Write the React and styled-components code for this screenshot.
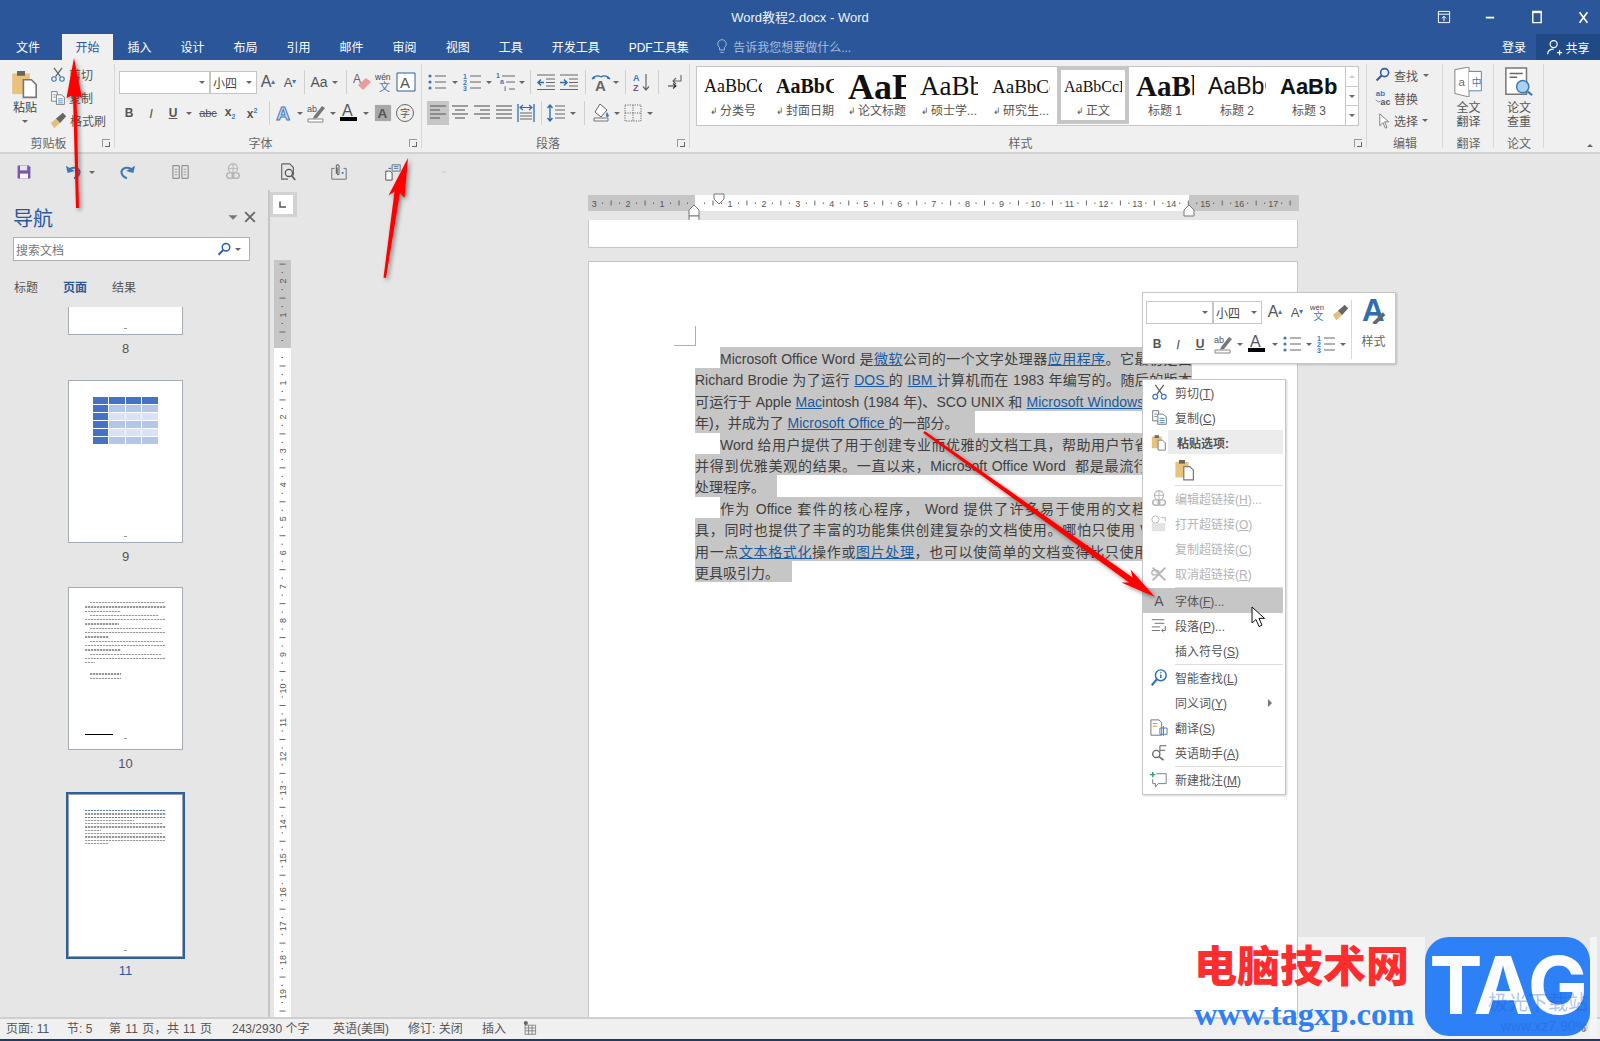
import React from 'react';
import styled, { createGlobalStyle } from 'styled-components';

const CJK = '"Liberation Sans", "Noto Sans CJK SC", sans-serif';

const Global = createGlobalStyle`
  html, body { margin: 0; padding: 0; background: #e6e6e6; overflow: hidden; }
  #root { width: 1600px; height: 1041px; }
  * { box-sizing: border-box; }
`;

const Screen = styled.div`
  position: relative;
  width: 1600px;
  height: 1041px;
  overflow: hidden;
  display: flex;
  flex-direction: column;
  font-family: ${CJK};
  font-size: 12px;
  color: #444;
  background: #e6e6e6;
`;

/* title bar + tabs */
const TitleBar = styled.div`
  height: 34px;
  background: #2b579a;
  display: grid;
  grid-template-columns: 1fr auto 1fr;
  align-items: center;
  color: #eef3fa;
  font-size: 13px;
`;
const Title = styled.div`
  grid-column: 2;
  padding-bottom: 1px;
`;
const WinButtons = styled.div`
  grid-column: 3;
  display: flex;
  justify-content: flex-end;
  gap: 12.5px;
`;
const WinBtn = styled.div`
  width: 34px;
  height: 20px;
  display: flex;
  align-items: center;
  justify-content: center;
`;
const TabRow = styled.div`
  height: 26px;
  background: #2b579a;
  display: flex;
  align-items: stretch;
`;
const Tab = styled.div`
  padding: 0 ${p => p.$r ?? p.$l ?? 14.5}px 2px ${p => p.$l ?? 14.5}px;
  display: flex;
  align-items: center;
  white-space: nowrap;
  color: ${p => (p.$active ? '#2b579a' : '#fff')};
  background: ${p => (p.$active ? '#f0f0f0' : 'transparent')};
`;
const TellMe = styled.div`
  display: flex;
  align-items: center;
  gap: 3px;
  margin-left: 11px;
  padding-bottom: 2px;
  color: #a6bddd;
  flex: 1;
`;
const Login = styled.div`
  display: flex;
  align-items: center;
  padding-bottom: 2px;
  color: #fff;
  margin-right: 10px;
`;
const Share = styled.div`
  width: 64px;
  background: #1f4a85;
  color: #fff;
  display: flex;
  align-items: center;
  justify-content: center;
  gap: 2px;
`;

/* ribbon */
const Ribbon = styled.div`
  height: 94px;
  background: #f0f0f0;
  border-bottom: 2px solid #d2d2d2;
  display: flex;
`;
const Group = styled.div`
  position: relative;
  width: ${p => p.$w}px;
  flex: none;
  display: flex;
  flex-direction: column;
  &::after {
    content: '';
    position: absolute;
    right: 0;
    top: 4px;
    bottom: 4px;
    width: 1px;
    background: #d8d8d8;
  }
`;
const GroupBody = styled.div`
  flex: 1;
  display: flex;
  flex-direction: ${p => p.$dir || 'column'};
  gap: ${p => p.$gap ?? 7}px;
  padding: ${p => p.$pad || '10px 0 0 4px'};
  min-height: 0;
`;
const GroupLabel = styled.div`
  height: 20px;
  padding: 2px ${p => p.$pr || 0}px 2px 0;
  flex: none;
  display: flex;
  align-items: center;
  justify-content: center;
  color: #666;
`;
const Launcher = styled.div`
  position: absolute;
  right: 5px;
  bottom: 5px;
  width: 8px;
  height: 8px;
  border-left: 1px solid #999;
  border-top: 1px solid #999;
  &::after {
    content: '';
    position: absolute;
    right: 0;
    bottom: 0;
    width: 4px;
    height: 4px;
    border-right: 1px solid #666;
    border-bottom: 1px solid #666;
  }
`;
const ToolRow = styled.div`
  display: flex;
  height: 24px;
  align-items: center;
  padding-left: ${p => p.$pl || 0}px;
  margin-left: ${p => p.$ml || 0}px;
`;
const Tool = styled.div`
  width: ${p => p.$w || 22}px;
  height: ${p => p.$h || 24}px;
  flex: none;
  display: flex;
  align-items: center;
  justify-content: center;
  background: ${p => (p.$on ? '#c6c6c6' : 'transparent')};
`;
const Letter = styled.span`
  font-family: ${p => p.$font || '"Liberation Sans"'}, "Noto Sans CJK SC", sans-serif;
  font-size: ${p => p.$size || 12}px;
  font-weight: ${p => (p.$bold ? 700 : 400)};
  font-style: ${p => (p.$italic ? 'italic' : 'normal')};
  text-decoration: ${p => (p.$under ? 'underline' : 'none')};
  color: ${p => p.$color || '#555'};
  line-height: 1;
  white-space: nowrap;
`;
const GlowA = styled(Letter)`
  -webkit-text-stroke: 1px #3f78b5;
`;
const Caret = styled.div`
  width: ${p => p.$w || 10}px;
  flex: none;
  display: flex;
  justify-content: center;
  transform: ${p => (p.$up ? 'scaleY(-1)' : p.$big ? 'scale(1.5)' : 'none')};
  margin-right: ${p => p.$mr || 0}px;
  &::after {
    content: '';
    border-left: 3px solid transparent;
    border-right: 3px solid transparent;
    border-top: 3px solid ${p => p.$color || '#666'};
  }
`;
const Divider = styled.div`
  width: ${p => p.$w || 8}px;
  height: 24px;
  flex: none;
  display: flex;
  justify-content: center;
  &::after {
    content: '';
    width: 1px;
    background: #d0d0d0;
  }
`;
const SelectBox = styled.div`
  width: ${p => p.$w}px;
  height: 23px;
  flex: none;
  background: #fff;
  border: 1px solid #c6c6c6;
  margin-right: ${p => p.$mr ?? 0}px;
  display: flex;
  align-items: center;
  justify-content: space-between;
  padding: 0 4px 0 2px;
  color: #444;
`;
const PasteCol = styled.div`
  width: 46px;
  display: flex;
  flex-direction: column;
  align-items: center;
  gap: 2px;
  flex: none;
  padding-top: 4px;
  line-height: 14px;
`;
const PasteCaret = styled(Caret)`
  margin-top: 3px;
`;
const ClipCol = styled.div`
  display: flex;
  flex-direction: column;
`;
const SmallAction = styled.div`
  height: 23px;
  display: flex;
  align-items: center;
  gap: 3px;
  color: #555;
  white-space: nowrap;
`;

const Gallery = styled.div`
  width: 663px;
  height: 60px;
  margin-left: 6px;
  margin-top: 6px;
  background: #fff;
  border: 1px solid #c6c6c6;
  display: flex;
`;
const Style = styled.div`
  width: 72px;
  flex: none;
  height: 58px;
  display: flex;
  flex-direction: column;
  align-items: center;
  border: ${p => (p.$on ? '4px solid #c6c6c6' : '4px solid transparent')};
  margin-top: -1px;
  overflow: hidden;
`;
const Preview = styled.div`
  width: 58px;
  height: 33px;
  flex: none;
  overflow: hidden;
  display: flex;
  align-items: center;
  white-space: nowrap;
  color: #111;
  font-family: ${p => p.$font || '"Liberation Serif"'}, serif;
  font-size: ${p => p.$size}px;
  font-weight: ${p => (p.$bold ? 700 : 400)};
`;
const StyleName = styled.div`
  display: flex;
  align-items: center;
  justify-content: center;
  gap: 2px;
  margin-top: 1px;
  color: #555;
  white-space: nowrap;
  font-size: 12px;
  line-height: 14px;
`;
const Enter = styled.span`
  font-size: 9px;
  color: #555;
`;
const GalleryScroll = styled.div`
  margin-left: auto;
  width: 13px;
  display: flex;
  flex-direction: column;
  border-left: 1px solid #c6c6c6;
`;
const ScrollCell = styled.div`
  flex: 1;
  display: flex;
  align-items: center;
  justify-content: center;
  border-bottom: 1px solid #c6c6c6;
  &:last-child { border-bottom: 0; }
`;
const BigCol = styled.div`
  flex: 1;
  display: flex;
  flex-direction: column;
  align-items: center;
  padding-top: 7px;
  color: #555;
  line-height: 14px;
  min-height: 0;
`;
const BigIcon = styled.div`
  height: 30px;
  flex: none;
  display: flex;
  align-items: center;
`;
const BigCaption = styled.div`
  text-align: center;
  margin-top: 4px;
`;
const Collapse = styled.div`
  flex: 1;
  display: flex;
  align-items: flex-end;
  justify-content: flex-end;
  padding: 0 5px 5px 0;
`;

/* quick access */
const Quick = styled.div`
  height: 36px;
  flex: none;
  display: flex;
  align-items: center;
  background: #e6e6e6;
  padding-left: 14px;
`;
const QuickBtn = styled.div`
  width: 20px;
  height: 24px;
  flex: none;
  margin-right: ${p => p.$mr || 0}px;
  margin-left: ${p => p.$ml || 0}px;
  display: flex;
  align-items: center;
  justify-content: center;
`;

/* main */
const Main = styled.div`
  flex: 1;
  min-height: 0;
  display: flex;
`;
const Nav = styled.div`
  width: 270px;
  flex: none;
  border-right: 2px solid #c6c6c6;
  display: flex;
  flex-direction: column;
  padding-top: 12px;
  overflow: hidden;
`;
const NavHead = styled.div`
  height: 30px;
  display: flex;
  align-items: center;
  padding: 0 12px 0 13px;
  color: #2b579a;
  font-size: 20px;
`;
const NavTitle = styled.span`
  flex: 1;
`;
const NavSearch = styled.div`
  width: 237px;
  height: 24px;
  margin: 5px 0 0 13px;
  background: #fff;
  border: 1px solid #b0b0b0;
  display: flex;
  align-items: center;
  padding: 0 5px 0 2px;
  color: #777;
  flex: none;
`;
const SearchText = styled.span`
  flex: 1;
`;
const NavTabs = styled.div`
  display: flex;
  height: 24px;
  margin: 13px 0 9px 14px;
  align-items: center;
  flex: none;
`;
const NavTab = styled.div`
  width: 49px;
  color: ${p => (p.$on ? '#2b579a' : '#555')};
  font-weight: ${p => (p.$on ? 700 : 400)};
`;
const Thumbs = styled.div`
  display: flex;
  flex-direction: column;
  align-items: center;
  width: 251px;
`;
const Thumb = styled.div`
  width: 115px;
  height: ${p => p.$h || 163}px;
  flex: none;
  background: #fff;
  border: 1px solid ${p => (p.$on ? '#9aa3ad' : '#a5abb3')};
  border-top-width: ${p => (p.$h ? 0 : 1)}px;
  outline: ${p => (p.$on ? '2px solid #2b5f9e' : 'none')};
  padding: ${p => p.$pad || 0};
  display: flex;
  flex-direction: column;
`;
const ThumbNum = styled.div`
  height: 24px;
  margin: 1px 0 ${p => p.$mb ?? 20}px;
  display: flex;
  align-items: center;
  justify-content: center;
  color: ${p => (p.$on ? '#2b579a' : '#555')};
  font-size: 13px;
`;
const FooterDot = styled.div`
  margin: auto auto 5px;
  width: 3px;
  height: 1px;
  background: #999;
`;
const MiniTable = styled.div`
  width: 65px;
  margin: 16px auto 0;
  display: grid;
  grid-template-columns: 15fr 16fr 15fr 16fr;
  gap: 1px;
`;
const MiniCell = styled.div`
  height: 7px;
  background: ${p => p.$c};
`;
const MiniLine = styled.div`
  height: 1.3px;
  width: ${p => p.$w}%;
  margin: ${p => p.$mt || 0}px 0 ${p => p.$mb ?? 3}px ${p => p.$ml || 0}px;
  background: repeating-linear-gradient(90deg, ${p => p.$c || '#999'} 0 2px, #e2e2e2 2px 3px);
`;
const MiniRule = styled.div`
  width: 34%;
  height: 1.4px;
  margin-top: auto;
  background: #000;
`;
const RuleDot = styled(FooterDot)`
  margin: 3px auto 10px;
`;

const RulerCol = styled.div`
  width: 27px;
  flex: none;
  padding-top: 2px;
  display: flex;
  flex-direction: column;
  align-items: center;
  overflow: hidden;
`;
const RulerCorner = styled.div`
  width: 28px;
  height: 25px;
  background: #d2d2d2;
  padding: 3px 4px;
  flex: none;
  margin-left: -1px;
`;
const RulerCornerIn = styled.div`
  height: 100%;
  background: #fff;
  display: flex;
  align-items: center;
  justify-content: center;
`;
const VRuler = styled.svg`
  margin-top: 43px;
  flex: none;
  display: block;
  margin-left: -3px;
`;

const DocArea = styled.div`
  flex: 1;
  min-width: 0;
  padding: 5px 0 0 291px;
  display: flex;
  flex-direction: column;
  overflow: hidden;
`;
const HRuler = styled.svg`
  display: block;
  flex: none;
  overflow: visible;
`;
const PageStub = styled.div`
  width: 710px;
  height: 28px;
  margin-top: 9px;
  flex: none;
  background: #fff;
  border: 1px solid #c6c6c6;
  border-top: 0;
`;
const Page = styled.div`
  width: 710px;
  flex: 1;
  margin-top: 13px;
  background: #fff;
  border: 1px solid #c6c6c6;
  border-bottom: 0;
  padding: 64px 0 0 85px;
`;
const CropMark = styled.div`
  width: 22px;
  height: 20px;
  border-right: 1px solid #b0b0b0;
  border-bottom: 1px solid #b0b0b0;
  margin-bottom: 1px;
`;
const Body = styled.div`
  margin-left: 21px;
  width: 497px;
  font-size: 14px;
  color: #404040;
`;
const Line = styled.div`
  height: 21.4px;
  padding-left: ${p => (p.$indent ? 25 : 0)}px;
  overflow: hidden;
`;
const Sel = styled.div`
  background: #c6c6c6;
  height: 21.4px;
  line-height: 25px;
  overflow: hidden;
  width: ${p => (p.$w ? `${p.$w}px` : 'auto')};
  text-align: justify;
  text-align-last: ${p => (p.$w ? 'left' : 'justify')};
  white-space: ${p => (p.$w ? 'nowrap' : 'normal')};
`;
const A = styled.span`
  color: #1a5a9e;
  text-decoration: underline;
`;

/* status */
const Status = styled.div`
  height: 24px;
  flex: none;
  background: #f0f0f0;
  border-top: 2px solid #cfcfcf;
  border-bottom: 2px solid #1f3a63;
  display: flex;
  align-items: center;
  padding: 0 6px 3px;
  color: #555;
  font-size: 12px;
  white-space: nowrap;
`;
const StatusItem = styled.div`
  width: ${p => p.$w}px;
  flex: none;
  letter-spacing: ${p => p.$ls || 0}px;
`;
const StatusRight = styled.div`
  margin-left: auto;
  display: flex;
  align-items: center;
  gap: 16px;
  padding-right: 8px;
`;

/* overlays */
const Arrows = styled.svg`
  position: absolute;
  left: 0;
  top: 0;
  pointer-events: none;
  z-index: 5;
`;
const Float = styled.div`
  position: absolute;
  left: ${p => p.$x}px;
  top: ${p => p.$y}px;
  width: ${p => p.$w}px;
  height: ${p => p.$h}px;
  background: #fff;
  border: 1px solid #c6c6c6;
  box-shadow: 1px 1px 2px rgba(0, 0, 0, 0.18);
  z-index: 3;
`;
const MiniBar = styled(Float)`
  display: flex;
  padding: 7px 0 0 3px;
`;
const MiniLeft = styled.div`
  width: 205px;
  flex: none;
  display: flex;
  flex-direction: column;
  gap: 8px;
`;
const MiniStyle = styled.div`
  flex: 1;
  margin-bottom: 4px;
  border-left: 1px solid #d8d8d8;
  display: flex;
  flex-direction: column;
  align-items: center;
  gap: 8px;
  color: #666;
`;
const MiniStyleIcon = styled.div`
  height: 26px;
  margin-top: -2px;
  padding-left: 3px;
`;
const Menu = styled(Float)``;
const MenuRow = styled.div`
  height: ${p => p.$h || 25}px;
  display: flex;
  align-items: center;
  position: relative;
  background: ${p => (p.$hover ? '#c6c6c6' : 'transparent')};
  color: ${p => (p.$off ? '#b4b4b4' : '#555')};
  margin-right: 2px;
`;
const MenuIcon = styled.div`
  width: ${p => p.$w || 32}px;
  margin-left: ${p => p.$ml || 0}px;
  flex: none;
  display: flex;
  align-items: center;
  justify-content: center;
`;
const MenuHead = styled.div`
  flex: 1;
  height: 100%;
  margin-left: -7px;
  display: flex;
  align-items: center;
  background: #ececec;
  padding-left: 9px;
  font-weight: 700;
  color: #555;
`;
const MenuLabel = styled.span`
  white-space: nowrap;
  u { text-underline-offset: 1px; }
`;
const MenuSep = styled.div`
  height: 1px;
  margin: 1px 2px 0 32px;
  background: #dcdcdc;
`;
const Submenu = styled.div`
  position: absolute;
  right: 11px;
  border-left: 4px solid #777;
  border-top: 4px solid transparent;
  border-bottom: 4px solid transparent;
`;
const Cursor = styled.svg`
  position: absolute;
  left: 1251px;
  top: 606px;
  z-index: 4;
`;

/* watermark */
const Mark = styled.div`
  position: absolute;
  left: 1190px;
  top: 937px;
  width: 407px;
  height: 99px;
  z-index: 6;
  display: flex;
`;
const MarkText = styled.div`
  width: 235px;
  flex: none;
  padding-left: 4px;
  background: linear-gradient(90deg, rgba(255, 255, 255, 0) 108px, rgba(245, 245, 245, 0.92) 108px);
`;
const MarkRed = styled.div`
  font-family: "Noto Sans CJK SC", sans-serif;
  font-weight: 900;
  font-size: 43px;
  line-height: 50px;
  margin-top: 1px;
  color: #ff2d2d;
  white-space: nowrap;
`;
const MarkBlue = styled.div`
  font-family: "Liberation Serif", serif;
  font-weight: 700;
  font-size: 32.5px;
  line-height: 34px;
  margin-top: 9px;
  color: #2f80f6;
  white-space: nowrap;
`;
const Logo = styled.div`
  position: relative;
  width: 165px;
  height: 99px;
  flex: none;
  padding-bottom: 5px;
  background: #2e80f6;
  border-radius: 24px;
  display: flex;
  justify-content: center;
  align-items: center;
  color: #fbfdff;
  font-family: "Inter", "Liberation Sans", sans-serif;
  font-weight: 700;
  font-size: 80px;
  letter-spacing: -2px;
`;
const LogoFaint = styled.div`
  position: absolute;
  right: 2px;
  top: ${p => p.$t}px;
  font-size: ${p => p.$s}px;
  font-weight: 400;
  letter-spacing: 0;
  line-height: 1.1;
  color: rgba(30, 90, 200, 0.35);
  font-family: ${CJK};
  white-space: nowrap;
`;
const MarkTail = styled.div`
  width: 7px;
  background: rgba(245, 245, 245, 0.92);
`;

/* drawings */
const Svg = ({ s = 20, children, ...r }) => (
  <svg width={s} height={s} viewBox="0 0 20 20" fill="none" {...r}>{children}</svg>
);
const GRAY = '#666';
const BL = '#3f78b5';

const Clipboard = ({ s = 20 }) => (
  <Svg s={s}>
    <path d="M2 4h11v13H2z" fill="#e9c27c" />
    <path d="M5 2.5h5v3H5z" fill="#666" />
    <path d="M9 8h5l3 3v8H9z" fill="#fff" stroke="#777" strokeWidth="1" />
  </Svg>
);
const Scissors = ({ s = 18 }) => (
  <Svg s={s}>
    <path d="M5 1l8 11M15 1L7 12" stroke={GRAY} strokeWidth="1.6" />
    <circle cx="5" cy="15" r="2.8" stroke={BL} strokeWidth="1.4" />
    <circle cx="15" cy="15" r="2.8" stroke={BL} strokeWidth="1.4" />
  </Svg>
);
const Copy = ({ s = 16 }) => (
  <Svg s={s}>
    <path d="M2 2h7v12H2z" stroke="#666" fill="#fff" />
    <path d="M8 6h6l4 3v9H8z" stroke="#666" fill="#fff" />
    <path d="M4 6h3M4 9h3M10 11h6M10 13.5h6M10 16h6" stroke={BL} />
  </Svg>
);
const Brush = ({ s = 18 }) => (
  <Svg s={s}>
    <path d="M1 13l6-5 5 5-7 6z" fill="#e6bf7a" />
    <path d="M7 8l8-7 4 4-7 8z" fill="#666" />
  </Svg>
);
const Bullets = ({ n }) => (
  <Svg>
    {[4, 10, 16].map((y, i) => (
      n ? (
        <text key={y} x="1" y={y + 3} fontSize="7" fontWeight="700" fill={BL} fontFamily="Liberation Sans">{i + 1}</text>
      ) : (
        <circle key={y} cx="3" cy={y} r="1.6" fill={BL} />
      )
    ))}
    <path d="M8 4h11M8 10h11M8 16h11" stroke="#666" strokeWidth="1.2" />
  </Svg>
);
const Multi = () => (
  <Svg>
    <text x="0" y="6" fontSize="7" fontWeight="700" fill={BL} fontFamily="Liberation Sans">1</text>
    <text x="4" y="12" fontSize="7" fontWeight="700" fill={BL} fontFamily="Liberation Sans">a</text>
    <text x="8" y="19" fontSize="7" fontWeight="700" fill={BL} fontFamily="Liberation Sans">i</text>
    <path d="M6 4h13M10 10h9M13 17h6" stroke="#666" strokeWidth="1.2" />
  </Svg>
);
const IndentIcon = ({ out }) => (
  <Svg>
    <path d="M1 3h18M10 7h9M10 10.5h9M10 14h9M1 17.5h18" stroke="#666" strokeWidth="1.1" />
    <path d={out ? 'M8 10.5H2m3-3l-3 3 3 3' : 'M1 10.5h7m-3-3l3 3-3 3'} stroke="#2f6db0" strokeWidth="1.5" />
  </Svg>
);
const Align = ({ kind }) => {
  const lines = {
    left: ['M2 3h16', 'M2 7h10', 'M2 11h16', 'M2 15h10'],
    center: ['M2 3h16', 'M5 7h10', 'M2 11h16', 'M5 15h10'],
    right: ['M2 3h16', 'M8 7h10', 'M2 11h16', 'M8 15h10'],
    just: ['M2 3h16', 'M2 7h16', 'M2 11h16', 'M2 15h16'],
  }[kind];
  return (
    <Svg>
      {lines.map(d => <path key={d} d={d} stroke="#666" strokeWidth="1.2" />)}
    </Svg>
  );
};
const Dist = () => (
  <Svg>
    <path d="M2 1v18M18 1v18" stroke="#2f6db0" strokeWidth="1.3" />
    <path d="M4 4.5h12m-3-2.5l3 2.5-3 2.5M7 2L4 4.5 7 7" stroke="#2f6db0" strokeWidth="1.2" />
    <path d="M4 10h12M4 13h12M4 16h12" stroke="#666" strokeWidth="1.1" />
  </Svg>
);
const Spacing = () => (
  <Svg>
    <path d="M4 2v16M1.5 5L4 2l2.5 3M1.5 15L4 18l2.5-3" stroke="#2f6db0" strokeWidth="1.4" />
    <path d="M9 3h10M9 7h10M9 11h10M9 15h10" stroke="#666" strokeWidth="1.2" />
  </Svg>
);
const Shade = () => (
  <Svg>
    <path d="M9 1l7 6-6 7-6-5z" fill="#fff" stroke="#666" />
    <path d="M16 9c1 2 2 3 2 4a1.6 1.6 0 0 1-3 0c0-1 0-2 1-4z" fill={BL} />
    <path d="M3 15h14v3H3z" fill="#f4f4f4" stroke="#777" />
  </Svg>
);
const Borders = () => (
  <Svg>
    <path d="M2 2h16v16H2zM10 2v16M2 10h16" stroke="#666" strokeDasharray="1.2 1.2" />
  </Svg>
);
const Sort = () => (
  <Svg>
    <text x="1" y="9" fontSize="9" fontWeight="700" fill={BL} fontFamily="Liberation Sans">A</text>
    <text x="1" y="19" fontSize="9" fontWeight="700" fill="#7b4ea3" fontFamily="Liberation Sans">Z</text>
    <path d="M14 2v16M11 14.5l3 3.5 3-3.5" stroke="#666" strokeWidth="1.2" />
  </Svg>
);
const Pilcrow = () => (
  <Svg>
    <path d="M16 3v6H8m3-3L8 9l3 3" stroke="#666" strokeWidth="1.1" />
    <path d="M3 14h8m-3-2.5l3 2.5-3 2.5" stroke="#333" strokeWidth="1.1" />
  </Svg>
);
const Eraser = () => (
  <Svg>
    <text x="0" y="11" fontSize="12" fill="#666" fontFamily="Liberation Sans">A</text>
    <path d="M5 13l8-7 5 4-8 8z" fill="#ef9a9a" />
  </Svg>
);
const Wen = ({ s = 20 }) => (
  <Svg s={s}>
    <text x="0" y="8" fontSize="8.5" fill="#444" fontFamily="Liberation Sans">wén</text>
    <text x="4" y="19" fontSize="11" fill={BL} fontFamily="Noto Sans CJK SC">文</text>
  </Svg>
);
const Highlight = () => (
  <Svg>
    <text x="1" y="9" fontSize="9" fill="#555" fontFamily="Liberation Sans">ab</text>
    <path d="M8 13L16 3l3 2-8 10-4 1z" fill="#777" />
    <path d="M2 16h15v3H2z" fill="#fff" stroke="#888" />
  </Svg>
);
const DirText = () => (
  <Svg>
    <text x="4" y="19" fontSize="15" fontWeight="700" fill="#666" fontFamily="Liberation Sans">A</text>
    <path d="M1 7c2-3 6-4 9-2M19 7c-2-3-6-4-9-2M1 7l3-1M19 7l-3-1" stroke="#2f6db0" strokeWidth="1.3" />
  </Svg>
);
const BlackA = () => (
  <Svg>
    <text x="3" y="13" fontSize="16" fill="#555" fontFamily="Liberation Sans">A</text>
    <path d="M1 14h17v4H1z" fill="#000" />
  </Svg>
);
const Magnifier = ({ s = 16 }) => (
  <Svg s={s}>
    <circle cx="12" cy="7" r="5" stroke="#2b5f9e" strokeWidth="2" />
    <path d="M8 11l-6 6" stroke="#2b5f9e" strokeWidth="2.6" />
  </Svg>
);
const Replace = () => (
  <Svg s={16}>
    <text x="1" y="8" fontSize="10" fontWeight="700" fill={BL} fontFamily="Liberation Sans">ab</text>
    <text x="7" y="19" fontSize="11" fontWeight="700" fill="#555" fontFamily="Liberation Sans">ac</text>
    <path d="M1 12l3 3 3-1" stroke={BL} />
  </Svg>
);
const Pointer = () => (
  <Svg s={16}>
    <path d="M6 1v15l4-4 3 7 2-1-3-7h5z" stroke="#666" fill="#fff" />
  </Svg>
);
const Translate = () => (
  <svg width="30" height="30" viewBox="0 0 34 34" fill="none">
    <path d="M1 3l16-3v34L1 30z" fill="#fff" stroke="#777" />
    <path d="M17 5h14v22H17" stroke={BL} fill="#fff" />
    <text x="5" y="21" fontSize="13" fill="#666" fontFamily="Liberation Sans">a</text>
    <text x="20" y="21" fontSize="11" fill={BL} fontFamily="Noto Sans CJK SC">中</text>
  </svg>
);
const Check = () => (
  <svg width="30" height="30" viewBox="0 0 32 32" fill="none">
    <path d="M2 1h22v28H2z" fill="#fff" stroke="#777" strokeWidth="1.6" />
    <path d="M6 7h14M6 11h8" stroke="#666" strokeWidth="1.6" />
    <circle cx="20" cy="21" r="6.5" fill="#a9d3f3" stroke={BL} strokeWidth="1.6" />
    <path d="M25 26l5 4" stroke={BL} strokeWidth="2.2" />
  </svg>
);
const Bulb = () => (
  <Svg s={16}>
    <path d="M10 2a5.5 5.5 0 0 0-3 10v3h6v-3a5.5 5.5 0 0 0-3-10zM8 18h4" stroke="#a6bddd" strokeWidth="1.2" />
  </Svg>
);
const Person = () => (
  <Svg s={17}>
    <circle cx="9" cy="6" r="4.2" stroke="#fff" strokeWidth="1.4" />
    <path d="M2 18c0-4 3-6 7-6M13 16h6M16 13v6" stroke="#fff" strokeWidth="1.4" />
  </Svg>
);
const Save = () => (
  <Svg s={16}>
    <path d="M2 2h14l2 2v14H2z" fill="#7b57a8" />
    <path d="M5 2h9v6H5z" fill="#e6e6e6" />
    <path d="M5 12h10v6H5z" fill="#f5f5f5" />
  </Svg>
);
const Undo = ({ flip }) => (
  <Svg s={18} transform={flip ? 'scale(-1 1)' : undefined}>
    <path d="M4 9c2-5 10-5 12 0 1 3-2 7-6 8" stroke="#3f78b5" strokeWidth="2.4" />
    <path d="M1 3l2 8 8-2z" fill="#3f78b5" />
  </Svg>
);
const Columns = () => (
  <Svg s={18}>
    <path d="M1 3h7v14H1zM11 3h7v14h-7z" stroke="#777" />
    <path d="M3 7h3M3 10h3M3 13h3M13 7h3M13 10h3M13 13h3" stroke="#999" />
  </Svg>
);
const Globe = ({ s = 18, c = '#b4b4b4' }) => (
  <Svg s={s}>
    <circle cx="10" cy="6" r="5" stroke={c} strokeWidth="1.3" />
    <path d="M5 6h10M10 1v10" stroke={c} />
    <rect x="3" y="11" width="8" height="6" rx="3" stroke={c} strokeWidth="1.6" />
    <rect x="9" y="11" width="8" height="6" rx="3" stroke={c} strokeWidth="1.6" />
  </Svg>
);
const Preview2 = () => (
  <Svg s={18}>
    <path d="M3 1h9l4 4v9M3 1v17h7" stroke="#666" strokeWidth="1.3" />
    <circle cx="11" cy="11" r="4" stroke="#555" strokeWidth="1.4" />
    <path d="M14 14l4 5" stroke="#555" strokeWidth="1.8" />
  </Svg>
);
const Attach = () => (
  <Svg s={18}>
    <path d="M2 6h3M15 6h3v12H2V6" stroke="#666" />
    <path d="M7 12V3a1.6 1.6 0 0 1 3 0v9a1 1 0 0 1-2 0V5" stroke="#666" strokeWidth="1.2" />
    <path d="M13 10h2v2h-2z" fill={BL} />
  </Svg>
);
const Notes = () => (
  <Svg s={18}>
    <path d="M9 2h9v7H9z" stroke="#666" />
    <path d="M11 4h5M11 6h5" stroke={BL} />
    <path d="M2 9h5l2 2v8H2z" fill="#fff" stroke="#444" />
    <path d="M5 6h3" stroke={BL} strokeWidth="1.3" />
  </Svg>
);
const Para = () => (
  <Svg s={18}>
    <path d="M2 3h14M5 7h11M2 11h9M2 15h9" stroke="#666" />
    <path d="M17 10v5h-4m2-2l-2 2 2 2" stroke="#666" />
  </Svg>
);
const Smart = () => (
  <Svg s={18}>
    <circle cx="12" cy="7" r="6" stroke="#2f6db0" strokeWidth="1.6" />
    <path d="M12 6v4M12 3.6v1" stroke="#2f6db0" strokeWidth="1.6" />
    <path d="M7.5 11.5L2 18" stroke="#2f6db0" strokeWidth="2.4" />
  </Svg>
);
const DocTrans = () => (
  <Svg s={18}>
    <path d="M1 1h9l3 3v14H1z" stroke="#666" fill="#fff" />
    <path d="M3 5h5M3 8h5" stroke="#e08a2e" />
    <path d="M11 10h8v7h-8zM15 8v11" stroke={BL} />
  </Svg>
);
const Assist = () => (
  <Svg s={18}>
    <circle cx="7" cy="11" r="4" stroke="#666" strokeWidth="1.5" />
    <path d="M10 14l5 4" stroke="#666" strokeWidth="1.8" />
    <path d="M11 2h7M11 7h6M11 2v7" stroke="#666" strokeWidth="1.2" />
  </Svg>
);
const Comment = () => (
  <Svg s={18}>
    <path d="M7 3h11v11H9l-3 4v-4H3V9" stroke="#777" />
    <path d="M3 1v6M0 4h6" stroke="#3c9a7a" strokeWidth="1.6" />
  </Svg>
);
const BreakLink = () => (
  <Svg s={18}>
    <path d="M3 3l14 14M17 3L3 17" stroke="#b4b4b4" strokeWidth="2" />
    <rect x="2" y="6" width="8" height="5" rx="2.5" stroke="#b4b4b4" strokeWidth="1.4" />
  </Svg>
);
const OpenLink = () => (
  <Svg s={18}>
    <circle cx="6" cy="5" r="4" stroke="#b4b4b4" />
    <path d="M2 9h15v9H2z" fill="#e2e2e2" />
    <path d="M12 3h5v4" stroke="#b4b4b4" />
  </Svg>
);
const Macro = () => (
  <Svg s={14}>
    <circle cx="4" cy="3" r="3" fill="#666" />
    <path d="M3 6h15v13H3zM3 10h15M3 14h15M8 6v13M13 6v13" stroke="#666" />
  </Svg>
);
const ViewPage = () => (
  <Svg s={14}>
    <path d="M3 2h14v16H3z" stroke="#777" />
    <path d="M6 6h8M6 9h8M6 12h8" stroke="#999" />
  </Svg>
);

const WinIcon = {
  ribbon: (
    <Svg s={14}>
      <path d="M2 2h16v16H2z" stroke="#fff" strokeWidth="1.4" />
      <path d="M2 6h16M10 16v-7m-3 3l3-3 3 3" stroke="#fff" strokeWidth="1.4" />
    </Svg>
  ),
  min: <Svg s={12}><path d="M3 11h14" stroke="#fff" strokeWidth="3" /></Svg>,
  max: <Svg s={14}><path d="M4 2h12v16H4z" stroke="#fff" strokeWidth="2" /><path d="M4 3h12" stroke="#fff" strokeWidth="3" /></Svg>,
  close: <Svg s={13}><path d="M4 2l12 16M16 2L4 18" stroke="#fff" strokeWidth="2.6" /></Svg>,
};

const hTicks = () => {
  const out = [];
  const step = 33.95;
  for (let i = -13; i <= 71; i += 1) {
    const x = 108 + (i * step) / 4;
    if (x < 2 || x > 709 || i === 0) continue;
    if (i % 4 === 0) {
      out.push(
        <text key={i} x={x} y="11.5" fontSize="9" textAnchor="middle" fill="#555" fontFamily="Liberation Sans">
          {Math.abs(i / 4)}
        </text>
      );
    } else if (i % 2 === 0) {
      out.push(<rect key={i} x={x - 0.5} y="5.5" width="1" height="5" fill="#666" />);
    } else {
      out.push(<rect key={i} x={x - 0.5} y="7.5" width="1" height="1.5" fill="#666" />);
    }
  }
  return out;
};

const vTicks = () => {
  const out = [];
  const step = 33.95;
  for (let i = -10; i <= 78; i += 1) {
    const y = 89 + (i * step) / 4;
    if (y < 2 || y > 755 || i === 0) continue;
    if (i % 4 === 0) {
      out.push(
        <text key={i} x="0" y="0" transform={`translate(12 ${y}) rotate(-90)`} fontSize="9" textAnchor="middle" fill="#555" fontFamily="Liberation Sans">
          {Math.abs(i / 4)}
        </text>
      );
    } else if (i % 2 === 0) {
      out.push(<rect key={i} x="5.5" y={y - 0.5} width="6" height="1" fill="#666" />);
    } else {
      out.push(<rect key={i} x="7.5" y={y - 0.5} width="1.5" height="1" fill="#666" />);
    }
  }
  return out;
};

const tabs = ['插入', '设计', '布局', '引用', '邮件', '审阅', '视图', '工具', '开发工具', 'PDF工具集'];

const styleList = [
  { p: 'AaBbCc', size: 18, name: '分类号', enter: true },
  { p: 'AaBbCc', size: 20, name: '封面日期', enter: true, bold: true, font: '"Liberation Sans Narrow"' },
  { p: 'AaBbCc', size: 36, name: '论文标题', enter: true, bold: true },
  { p: 'AaBbCc', size: 27, name: '硕士学...', enter: true },
  { p: 'AaBbCc', size: 19, name: '研究生...', enter: true, font: '"Liberation Sans Narrow"' },
  { p: 'AaBbCcI', size: 16, name: '正文', enter: true, on: true },
  { p: 'AaBbCc', size: 29, name: '标题 1', bold: true },
  { p: 'AaBbCc', size: 23, name: '标题 2', font: '"Liberation Sans"' },
  { p: 'AaBbCc', size: 22, name: '标题 3', bold: true, font: '"Liberation Sans"' },
];

const tableRows = [
  ['#4472c4', '#4472c4', '#4472c4', '#4472c4'],
  ['#4472c4', '#b4c6e7', '#b4c6e7', '#b4c6e7'],
  ['#4472c4', '#dae3f3', '#dae3f3', '#dae3f3'],
  ['#4472c4', '#b4c6e7', '#b4c6e7', '#b4c6e7'],
  ['#4472c4', '#dae3f3', '#dae3f3', '#dae3f3'],
  ['#4472c4', '#b4c6e7', '#b4c6e7', '#b4c6e7'],
];

const MenuItem = ({ icon, t, k, tail, off, hover, h }) => (
  <MenuRow $off={off} $hover={hover} $h={h}>
    <MenuIcon>{icon}</MenuIcon>
    <MenuLabel>{t}(<u>{k}</u>){tail}</MenuLabel>
  </MenuRow>
);

const App = () => (
  <Screen>
    <Global />
    <TitleBar>
      <Title>Word教程2.docx - Word</Title>
      <WinButtons>
        <WinBtn>{WinIcon.ribbon}</WinBtn>
        <WinBtn>{WinIcon.min}</WinBtn>
        <WinBtn>{WinIcon.max}</WinBtn>
        <WinBtn>{WinIcon.close}</WinBtn>
      </WinButtons>
    </TitleBar>
    <TabRow>
      <Tab $l={16} $r={22}>文件</Tab>
      <Tab $active $l={13.5}>开始</Tab>
      {tabs.map(t => <Tab key={t}>{t}</Tab>)}
      <TellMe><Bulb />告诉我您想要做什么...</TellMe>
      <Login>登录</Login>
      <Share><Person />共享</Share>
    </TabRow>

    <Ribbon>
      <Group $w={115}>
        <GroupBody $dir="row" $gap={2} $pad="3px 0 0 2px">
          <PasteCol>
            <Clipboard s={32} />
            <span>粘贴</span>
            <PasteCaret />
          </PasteCol>
          <ClipCol>
            <SmallAction><Scissors s={16} />剪切</SmallAction>
            <SmallAction><Copy s={16} />复制</SmallAction>
            <SmallAction><Brush s={17} />格式刷</SmallAction>
          </ClipCol>
        </GroupBody>
        <GroupLabel $pr={18}>剪贴板</GroupLabel>
        <Launcher />
      </Group>

      <Group $w={307}>
        <GroupBody>
          <ToolRow>
            <SelectBox $w={91}><span /><Caret $w={6} /></SelectBox>
            <SelectBox $w={47}><span>小四</span><Caret $w={6} /></SelectBox>
            <Tool><Letter $size={16}>A</Letter><Letter $size={8} $color={BL}>▴</Letter></Tool>
            <Tool $w={22}><Letter $size={13}>A</Letter><Letter $size={8} $color={BL}>▾</Letter></Tool>
            <Divider $w={7} />
            <Tool><Letter $size={14}>Aa</Letter></Tool>
            <Caret />
            <Divider $w={12} />
            <Tool><Eraser /></Tool>
            <Tool $w={21}><Wen /></Tool>
            <Tool>
              <Svg s={20}>
                <path d="M1 1h18v18H1z" fill="#fff" stroke="#2b5f9e" />
                <text x="4" y="16" fontSize="15" fill="#555" fontFamily="Liberation Sans">A</text>
              </Svg>
            </Tool>
          </ToolRow>
          <ToolRow $ml={-1}>
            <Tool><Letter $bold>B</Letter></Tool>
            <Tool><Letter $italic $size={13}>I</Letter></Tool>
            <Tool><Letter $under $bold>U</Letter></Tool>
            <Caret />
            <Tool $w={28}><Letter $size={11}><s>abc</s></Letter></Tool>
            <Tool $w={16}><Letter $bold>x<sub style={{ fontSize: 7, color: BL }}>2</sub></Letter></Tool>
            <Tool $w={28}><Letter $bold>x<sup style={{ fontSize: 7, color: BL }}>2</sup></Letter></Tool>
            <Divider $w={6} />
            <Tool><GlowA $size={19} $bold $color="#cfe2f7">A</GlowA></Tool>
            <Caret $w={11} />
            <Tool><Highlight /></Tool>
            <Caret $w={11} />
            <Tool><BlackA /></Tool>
            <Caret $w={12} />
            <Tool>
              <Svg s={18}>
                <path d="M1 1h18v18H1z" fill="#a8a8a8" />
                <text x="4" y="16" fontSize="15" fontWeight="700" fill="#555" fontFamily="Liberation Sans">A</text>
              </Svg>
            </Tool>
            <Tool>
              <Svg s={20}>
                <circle cx="10" cy="10" r="8.5" stroke="#666" />
                <text x="5" y="14" fontSize="10" fill="#555" fontFamily="Noto Sans CJK SC">字</text>
              </Svg>
            </Tool>
          </ToolRow>
        </GroupBody>
        <GroupLabel $pr={16}>字体</GroupLabel>
        <Launcher />
      </Group>

      <Group $w={268}>
        <GroupBody>
          <ToolRow>
            <Tool><Bullets /></Tool><Caret $w={13} />
            <Tool><Bullets n /></Tool><Caret $w={12} />
            <Tool><Multi /></Tool><Caret $w={9} />
            <Divider $w={9} />
            <Tool><IndentIcon out /></Tool>
            <Tool $w={24}><IndentIcon /></Tool>
            <Divider $w={9} />
            <Tool><DirText /></Tool><Caret $w={8} />
            <Divider $w={11} />
            <Tool><Sort /></Tool>
            <Divider $w={11} />
            <Tool><Pilcrow /></Tool>
          </ToolRow>
          <ToolRow $pl={1}>
            <Tool $on><Align kind="left" /></Tool>
            <Tool><Align kind="center" /></Tool>
            <Tool><Align kind="right" /></Tool>
            <Tool><Align kind="just" /></Tool>
            <Tool><Dist /></Tool>
            <Divider $w={8} />
            <Tool><Spacing /></Tool><Caret $w={11} />
            <Divider $w={12} />
            <Tool><Shade /></Tool><Caret $w={10} />
            <Tool><Borders /></Tool><Caret $w={11} />
          </ToolRow>
        </GroupBody>
        <GroupLabel $pr={16}>段落</GroupLabel>
        <Launcher />
      </Group>

      <Group $w={677}>
        <GroupBody $pad="0" $gap={0}>
          <Gallery>
            {styleList.map(s => (
              <Style key={s.name} $on={s.on}>
                <Preview $size={s.size} $bold={s.bold} $font={s.font}>{s.p}</Preview>
                <StyleName>{s.enter && <Enter>↲</Enter>}{s.name}</StyleName>
              </Style>
            ))}
            <GalleryScroll>
              <ScrollCell><Caret $w={8} $color="#ccc" $up /></ScrollCell>
              <ScrollCell><Caret $w={8} /></ScrollCell>
              <ScrollCell><Caret $w={8} /></ScrollCell>
            </GalleryScroll>
          </Gallery>
        </GroupBody>
        <GroupLabel $pr={16}>样式</GroupLabel>
        <Launcher />
      </Group>

      <Group $w={76}>
        <GroupBody $pad="4px 0 0 8px" $gap={0}>
          <SmallAction><Magnifier />查找<Caret /></SmallAction>
          <SmallAction><Replace />替换</SmallAction>
          <SmallAction><Pointer />选择<Caret $w={8} /></SmallAction>
        </GroupBody>
        <GroupLabel>编辑</GroupLabel>
      </Group>

      <Group $w={51}>
        <BigCol>
          <BigIcon><Translate /></BigIcon>
          <BigCaption>全文<br />翻译</BigCaption>
        </BigCol>
        <GroupLabel>翻译</GroupLabel>
      </Group>

      <Group $w={50}>
        <BigCol>
          <BigIcon><Check /></BigIcon>
          <BigCaption>论文<br />查重</BigCaption>
        </BigCol>
        <GroupLabel>论文</GroupLabel>
      </Group>

      <Collapse><Caret $w={10} $up /></Collapse>
    </Ribbon>

    <Quick>
      <QuickBtn $mr={30}><Save /></QuickBtn>
      <QuickBtn><Undo /></QuickBtn>
      <Caret $w={16} />
      <QuickBtn $mr={34} $ml={17}><Undo flip /></QuickBtn>
      <QuickBtn $mr={32}><Columns /></QuickBtn>
      <QuickBtn $mr={35}><Globe /></QuickBtn>
      <QuickBtn $mr={31}><Preview2 /></QuickBtn>
      <QuickBtn $mr={34}><Attach /></QuickBtn>
      <QuickBtn $mr={36}><Notes /></QuickBtn>
      <Caret $w={10} $color="#d6d6d6" />
    </Quick>

    <Main>
      <Nav>
        <NavHead>
          <NavTitle>导航</NavTitle>
          <Caret $w={14} $color="#777" $big $mr={4} />
          <Svg s={12}><path d="M2 2l16 16M18 2L2 18" stroke="#666" strokeWidth="3" /></Svg>
        </NavHead>
        <NavSearch>
          <SearchText>搜索文档</SearchText>
          <Magnifier s={15} />
          <Caret $w={12} />
        </NavSearch>
        <NavTabs>
          <NavTab>标题</NavTab>
          <NavTab $on>页面</NavTab>
          <NavTab>结果</NavTab>
        </NavTabs>
        <Thumbs>
          <Thumb $h={28}><FooterDot /></Thumb>
          <ThumbNum>8</ThumbNum>
          <Thumb>
            <MiniTable>
              {tableRows.flat().map((c, i) => <MiniCell key={i} $c={c} />)}
            </MiniTable>
            <FooterDot />
          </Thumb>
          <ThumbNum $mb={19}>9</ThumbNum>
          <Thumb $pad="14px 16px 0">
            {[92, 100, 44, 85, 100, 42, 88, 100, 30, 90, 100, 44, 88, 100, 12].map((w, i) => (
              <MiniLine key={i} $w={w} $ml={i % 3 === 0 ? 5 : 0} />
            ))}
            <MiniLine $w={38} $ml={5} $mt={7} />
            <MiniLine $w={38} $ml={5} />
            <MiniRule />
            <RuleDot />
          </Thumb>
          <ThumbNum $mb={19}>10</ThumbNum>
          <Thumb $on $pad="15px 16px 0">
            {[100, 100, 100, 60, 96, 100, 20, 96, 100, 100, 30].map((w, i) => (
              <MiniLine key={i} $w={w} $mb={2} $c={i === 0 || i === 2 ? '#5a86b8' : '#999'} />
            ))}
            <FooterDot />
          </Thumb>
          <ThumbNum $on>11</ThumbNum>
        </Thumbs>
      </Nav>

      <RulerCol>
        <RulerCorner>
          <RulerCornerIn>
            <Svg s={10}><path d="M4 3v11h12" stroke="#555" strokeWidth="3" /></Svg>
          </RulerCornerIn>
        </RulerCorner>
        <VRuler width="17" height="757">
          <rect width="17" height="88" fill="#c6c6c6" />
          <rect y="88" width="17" height="669" fill="#fff" />
          {vTicks()}
        </VRuler>
      </RulerCol>

      <DocArea>
        <HRuler width="711" height="16">
          <rect width="711" height="16" fill="#c6c6c6" />
          <rect x="107" width="494" height="16" fill="#fff" />
          {hTicks()}
          <path d="M126 -1h10v5l-5 5-5-5z" fill="#fff" stroke="#777" />
          <path d="M101 21v-6l5-5 5 5v6z" fill="#fff" stroke="#777" />
          <path d="M101 21h10v5h-10z" fill="#fff" stroke="#777" />
          <path d="M596 21v-6l5-5 5 5v6z" fill="#fff" stroke="#777" />
        </HRuler>
        <PageStub />
        <Page>
          <CropMark />
          <Body>
            <Line $indent><Sel>Microsoft Office Word 是<A>微软</A>公司的一个文字处理器<A>应用程序</A>。它最初是由</Sel></Line>
            <Line><Sel>Richard Brodie 为了运行 <A>DOS </A>的 <A>IBM </A>计算机而在 1983 年编写的。随后的版本</Sel></Line>
            <Line><Sel>可运行于 Apple <A>Mac</A>intosh (1984 年)、SCO UNIX 和 <A>Microsoft Windows</A> (1989&nbsp;&nbsp;</Sel></Line>
            <Line><Sel $w={280}>年)，并成为了 <A>Microsoft Office </A>的一部分。</Sel></Line>
            <Line $indent><Sel>Word 给用户提供了用于创建专业而优雅的文档工具，帮助用户节省时间，</Sel></Line>
            <Line><Sel>并得到优雅美观的结果。一直以来，Microsoft Office Word &nbsp;都是最流行的文字</Sel></Line>
            <Line><Sel $w={82}>处理程序。</Sel></Line>
            <Line $indent><Sel>作为 Office 套件的核心程序， Word 提供了许多易于使用的文档创建工</Sel></Line>
            <Line><Sel>具，同时也提供了丰富的功能集供创建复杂的文档使用。哪怕只使用 Word 的</Sel></Line>
            <Line><Sel>用一点<A>文本格式化</A>操作或<A>图片处理</A>，也可以使简单的文档变得比只使用纯文本</Sel></Line>
            <Line><Sel $w={97}>更具吸引力。</Sel></Line>
          </Body>
        </Page>
      </DocArea>
    </Main>

    <Status>
      <StatusItem $w={61}>页面: 11</StatusItem>
      <StatusItem $w={42}>节: 5</StatusItem>
      <StatusItem $w={123} $ls={0.4}>第 11 页，共 11 页</StatusItem>
      <StatusItem $w={101}>243/2930 个字</StatusItem>
      <StatusItem $w={75}>英语(美国)</StatusItem>
      <StatusItem $w={74}>修订: 关闭</StatusItem>
      <StatusItem $w={41}>插入</StatusItem>
      <Macro />
      <StatusRight>
        <ViewPage />
        <ViewPage />
        <ViewPage />
        <span>90%</span>
      </StatusRight>
    </Status>

    <MiniBar $x={1142} $y={292} $w={254} $h={72}>
      <MiniLeft>
        <ToolRow>
          <SelectBox $w={67}><span /><Caret $w={6} /></SelectBox>
          <SelectBox $w={49} $mr={2}><span>小四</span><Caret $w={6} /></SelectBox>
          <Tool><Letter $size={16}>A</Letter><Letter $size={8} $color={BL}>▴</Letter></Tool>
          <Tool><Letter $size={13}>A</Letter><Letter $size={8} $color={BL}>▾</Letter></Tool>
          <Tool><Wen s={18} /></Tool>
          <Tool $w={20}><Brush s={17} /></Tool>
        </ToolRow>
        <ToolRow $pl={1}>
          <Tool $w={20}><Letter $bold>B</Letter></Tool>
          <Tool><Letter $italic $size={13}>I</Letter></Tool>
          <Tool><Letter $bold $under>U</Letter></Tool>
          <Tool $w={24}><Highlight /></Tool><Caret />
          <Tool $w={24}><BlackA /></Tool><Caret $w={11} />
          <Tool $w={23}><Bullets /></Tool><Caret $w={11} />
          <Tool $w={23}><Bullets n /></Tool><Caret $w={11} />
        </ToolRow>
      </MiniLeft>
      <MiniStyle>
        <MiniStyleIcon>
          <Svg s={26}>
            <text x="0" y="18" fontSize="24" fontWeight="700" fill="#2f6db0" fontFamily="Liberation Sans">A</text>
            <path d="M8 19l8-8 2 2-8 8z" fill="#666" />
          </Svg>
        </MiniStyleIcon>
        <span>样式</span>
      </MiniStyle>
    </MiniBar>

    <Menu $x={1142} $y={379} $w={144} $h={416}>
      <MenuItem icon={<Scissors s={17} />} t="剪切" k="T" />
      <MenuItem icon={<Copy s={17} />} t="复制" k="C" />
      <MenuRow $h={24}>
        <MenuIcon><Clipboard s={18} /></MenuIcon>
        <MenuHead>粘贴选项:</MenuHead>
      </MenuRow>
      <MenuRow $h={30}>
        <MenuIcon />
        <MenuIcon $w={24} $ml={-2}><Clipboard s={28} /></MenuIcon>
      </MenuRow>
      <MenuSep />
      <MenuItem off icon={<Globe />} t="编辑超链接" k="H" tail="..." />
      <MenuItem off icon={<OpenLink />} t="打开超链接" k="O" />
      <MenuItem off t="复制超链接" k="C" />
      <MenuItem off icon={<BreakLink />} t="取消超链接" k="R" />
      <MenuSep />
      <MenuItem hover icon={<Letter $size={14}>A</Letter>} t="字体" k="F" tail="..." />
      <MenuItem icon={<Para />} t="段落" k="P" tail="..." />
      <MenuItem t="插入符号" k="S" />
      <MenuSep />
      <MenuItem icon={<Smart />} t="智能查找" k="L" />
      <MenuRow>
        <MenuIcon />
        <MenuLabel>同义词(<u>Y</u>)</MenuLabel>
        <Submenu />
      </MenuRow>
      <MenuItem icon={<DocTrans />} t="翻译" k="S" />
      <MenuItem icon={<Assist />} t="英语助手" k="A" />
      <MenuSep />
      <MenuItem icon={<Comment />} t="新建批注" k="M" />
    </Menu>

    <Cursor width="16" height="22" viewBox="0 0 16 22">
      <path d="M1 1v16l4-3.5 3 7 3-1.3-3-6.8h5.5z" fill="#fff" stroke="#111" strokeWidth="1" />
    </Cursor>

    <Arrows width="1600" height="1041">
      <defs>
        <filter id="arrowShadow" x="-30%" y="-30%" width="160%" height="160%">
          <feDropShadow dx="2" dy="2" stdDeviation="2" floodColor="#000" floodOpacity="0.45" />
        </filter>
      </defs>
      <g filter="url(#arrowShadow)" fill="#f00">
        <path d="M74 58l8 40-5.5-3 2.5 113h-3l-3-113-6.5 3z" />
        <path d="M408 158l-3.5 40-4.5-5-14 85-2.5-.5 11-86-6 4z" />
        <path d="M1155 597L1121.4 582.5 1129 582.5 923.3 433 924.7 431 1132.6 577.5 1130.6 569.5z" />
      </g>
    </Arrows>

    <Mark>
      <MarkText>
        <MarkRed>电脑技术网</MarkRed>
        <MarkBlue>www.tagxp.com</MarkBlue>
      </MarkText>
      <Logo>
        TAG
        <LogoFaint $t={55} $s={20}>极光下载站</LogoFaint>
        <LogoFaint $t={82} $s={14}>www.xz7.90%</LogoFaint>
      </Logo>
      <MarkTail />
    </Mark>
  </Screen>
);

export default App;
